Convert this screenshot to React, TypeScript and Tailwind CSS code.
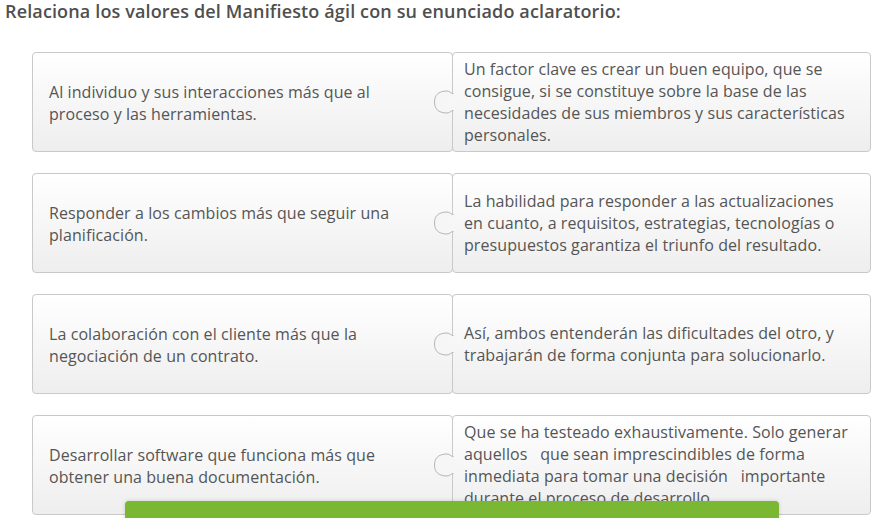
import React from "react";

type Row = { left: string[]; right: string[] };

const rows: Row[] = [
  {
    left: ["Al individuo y sus interacciones más que al", "proceso y las herramientas."],
    right: [
      "Un factor clave es crear un buen equipo, que se",
      "consigue, si se constituye sobre la base de las",
      "necesidades de sus miembros y sus características",
      "personales.",
    ],
  },
  {
    left: ["Responder a los cambios más que seguir una", "planificación."],
    right: [
      "La habilidad para responder a las actualizaciones",
      "en cuanto, a requisitos, estrategias, tecnologías o",
      "presupuestos garantiza el triunfo del resultado.",
    ],
  },
  {
    left: ["La colaboración con el cliente más que la", "negociación de un contrato."],
    right: [
      "Así, ambos entenderán las dificultades del otro, y",
      "trabajarán de forma conjunta para solucionarlo.",
    ],
  },
  {
    left: ["Desarrollar software que funciona más que", "obtener una buena documentación."],
    right: [
      "Que se ha testeado exhaustivamente. Solo generar",
      "aquellos   que sean imprescindibles de forma",
      "inmediata para tomar una decisión   importante",
      "durante el proceso de desarrollo.",
    ],
  },
];

function Knob() {
  return (
    <svg
      className="absolute left-[-20px] top-1/2 -translate-y-1/2"
      width="22"
      height="24"
      viewBox="0 0 22 24"
    >
      <path
        d="M22 3.5 L20 3.5 C17.5 3.5 17 1 14 1 C5 1 1.5 5.5 1.5 12 C1.5 18.5 5 23 14 23 C17 23 17.5 20.5 20 20.5 L22 20.5 Z"
        fill="#f6f6f6"
      />
      <path
        d="M20.5 3.5 C17.5 3.5 17 1 14 1 C5 1 1.5 5.5 1.5 12 C1.5 18.5 5 23 14 23 C17 23 17.5 20.5 20.5 20.5"
        fill="none"
        stroke="#b5b5b5"
        strokeWidth="1"
      />
    </svg>
  );
}

export default function App() {
  return (
    <div
      className="relative h-[518px] w-[880px] overflow-hidden bg-white text-[#555555]"
      style={{ fontFamily: '"Open Sans", "Noto Sans", sans-serif' }}
    >
      <h1 className="pl-[5px] text-[18px] font-semibold leading-[23px] tracking-[0.14px] text-[#4f4f4f]">
        Relaciona los valores del Manifiesto ágil con su enunciado aclaratorio:
      </h1>
      <div className="mt-[29px] flex flex-col gap-[21px] pl-[32px]">
        {rows.map((r, i) => (
          <div key={i} className="flex h-[100px] w-[839px]">
            <div className="flex w-[421px] items-center rounded-[4px] border border-[#c9c9c9] bg-gradient-to-b from-white to-[#eeeeee] pl-[16px] text-[16px] leading-[22px] tracking-[0.08px]">
              <div className="pt-[1px]">
                {r.left.map((l, j) => (
                  <div key={j} className="whitespace-pre">
                    {l}
                  </div>
                ))}
              </div>
            </div>
            <div className="relative -ml-px flex w-[419px] items-center rounded-[4px] border border-[#c9c9c9] bg-gradient-to-b from-white to-[#eeeeee] pl-[11px] text-[16px] leading-[22px] tracking-[0.08px]">
              <Knob />
              <div>
                {r.right.map((l, j) => (
                  <div key={j} className="whitespace-pre">
                    {l}
                  </div>
                ))}
              </div>
            </div>
          </div>
        ))}
      </div>
      <div className="absolute left-[125px] top-[501px] h-[40px] w-[654px] rounded-t-[4px] bg-[#7ab733] shadow-[0_0_4px_rgba(0,0,0,0.15)]" />
    </div>
  );
}
